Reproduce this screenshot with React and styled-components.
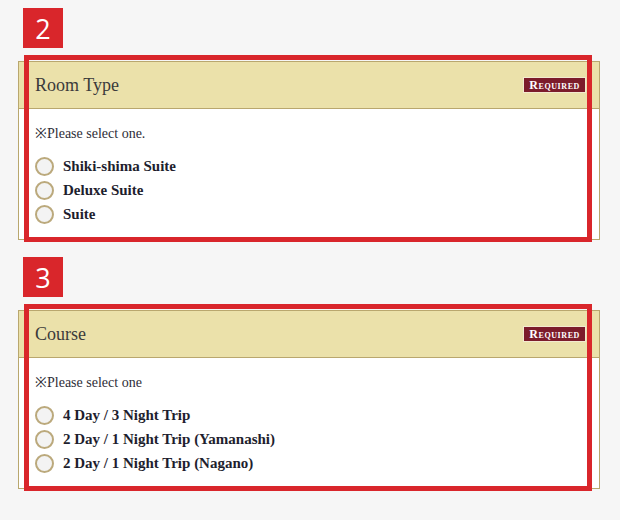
import React from 'react'
import styled, { createGlobalStyle } from 'styled-components'

const GlobalStyle = createGlobalStyle`
  body {
    margin: 0;
    background: #f6f6f6;
    font-family: 'Liberation Serif', 'Times New Roman', serif;
  }
`

const Page = styled.div`
  display: flex;
  flex-direction: column;
  gap: 17px;
  padding: 8px 20px 30px 18px;
`

const Section = styled.section`
  display: flex;
  flex-direction: column;
  gap: 13px;
`

const StepBadge = styled.div`
  display: flex;
  align-items: center;
  justify-content: center;
  width: 40px;
  height: 40px;
  margin-left: 5px;
  background: #d9262b;
  color: #fff;
  font-family: 'Open Sans', 'Noto Sans', sans-serif;
  font-size: 27px;
  font-weight: 400;
  line-height: 1;
`

const Card = styled.div`
  position: relative;
  border: 1px solid #b9a76e;
  background: #fff;
`

const Highlight = styled.div`
  position: absolute;
  top: -7px;
  left: 5px;
  right: 7px;
  bottom: -3px;
  border: 5px solid #d9262b;
  pointer-events: none;
`

const CardHeader = styled.div`
  display: flex;
  align-items: center;
  justify-content: space-between;
  height: 46px;
  padding: 0 14px 0 16px;
  background: #ebe1aa;
  border-bottom: 1px solid #b9a76e;
`

const Title = styled.h2`
  margin: 0;
  color: #3b3b3b;
  font-size: 18px;
  font-weight: 400;
`

const Required = styled.span`
  display: inline-flex;
  align-items: center;
  height: 14px;
  padding: 0 5px;
  background: #7c1c2b;
  outline: 1px solid #f3ead0;
  color: #fff;
  font-size: 12px;
  font-weight: 700;
  font-variant: small-caps;
  letter-spacing: 0.6px;
  line-height: 1;
`

const CardBody = styled.div`
  padding: 17px 16px 13px 16px;
`

const Note = styled.p`
  margin: 0 0 12px;
  color: #2e2e38;
  font-size: 14px;
  line-height: 16px;
`

const Options = styled.div`
  display: flex;
  flex-direction: column;
`

const Option = styled.label`
  display: flex;
  align-items: center;
  gap: 9px;
  height: 24px;
  color: #1e1e2e;
  font-size: 15px;
  font-weight: 700;
`

const Radio = styled.span`
  box-sizing: border-box;
  width: 19px;
  height: 19px;
  border: 2px solid #bba97c;
  border-radius: 50%;
  background: #f3f3f3;
`

const sections = [
  {
    step: 2,
    title: 'Room Type',
    note: '※Please select one.',
    options: ['Shiki-shima Suite', 'Deluxe Suite', 'Suite'],
  },
  {
    step: 3,
    title: 'Course',
    note: '※Please select one',
    options: [
      '4 Day / 3 Night Trip',
      '2 Day / 1 Night Trip (Yamanashi)',
      '2 Day / 1 Night Trip (Nagano)',
    ],
  },
]

const App = () => (
  <>
    <GlobalStyle />
    <Page>
      {sections.map(s => (
        <Section key={s.step}>
          <StepBadge>{s.step}</StepBadge>
          <Card>
            <CardHeader>
              <Title>{s.title}</Title>
              <Required>Required</Required>
            </CardHeader>
            <CardBody>
              <Note>{s.note}</Note>
              <Options>
                {s.options.map(o => (
                  <Option key={o}>
                    <Radio />
                    {o}
                  </Option>
                ))}
              </Options>
            </CardBody>
            <Highlight />
          </Card>
        </Section>
      ))}
    </Page>
  </>
)

export default App
